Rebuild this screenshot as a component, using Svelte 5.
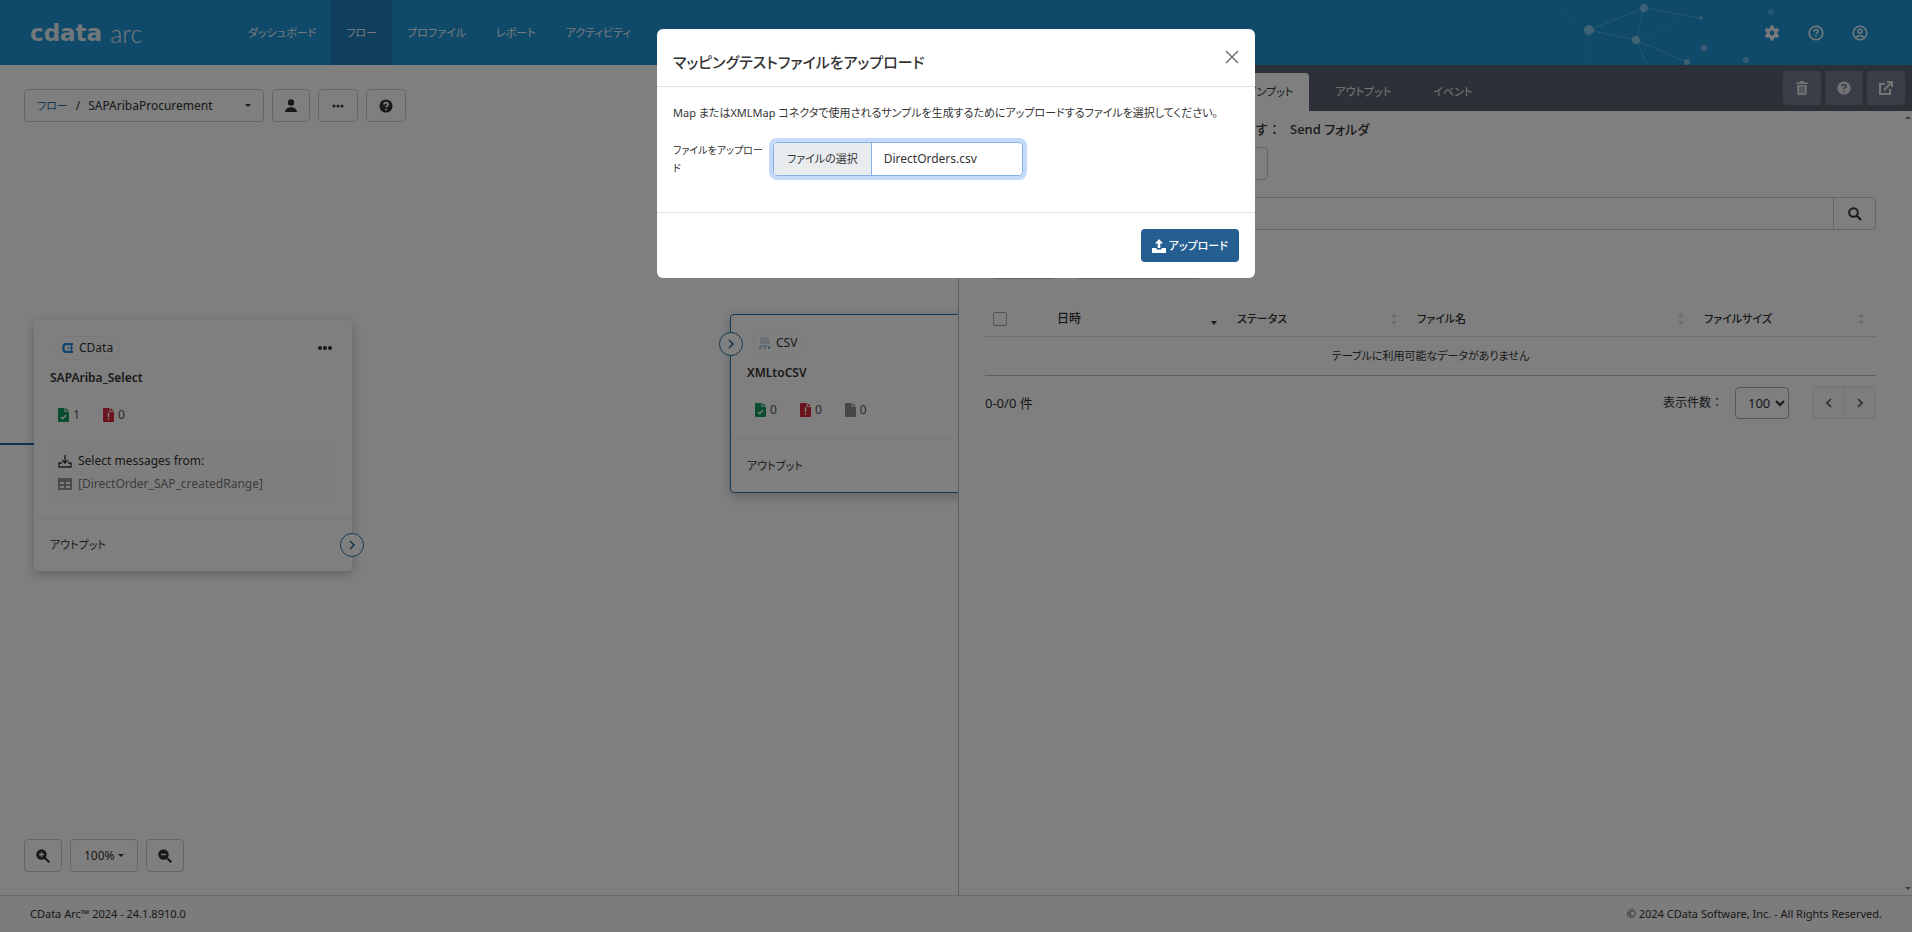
<!--
  App.svelte - Flow workspace
  Flow canvas on the left, connector panel on the right, upload dialog on top.
-->

<script lang="ts">
  interface NavItem {
    label: string;
    active?: boolean;
  }

  const nav: NavItem[] = [
    { label: 'ダッシュボード' },
    { label: 'フロー', active: true },
    { label: 'プロファイル' },
    { label: 'レポート' },
    { label: 'アクティビティ' },
  ];

  const tabs: NavItem[] = [
    { label: 'インプット', active: true },
    { label: 'アウトプット' },
    { label: 'イベント' },
  ];

  const columns = [
    { label: '日時', cls: 'col-date', sorted: true },
    { label: 'ステータス', cls: 'col-status', sorted: false },
    { label: 'ファイル名', cls: 'col-name', sorted: false },
    { label: 'ファイルサイズ', cls: 'col-size', sorted: false },
  ];

  let dialogOpen = $state(true);
  let fileName = $state('DirectOrders.csv');
  let query = $state('');
  let pageSize = $state('100');

  function handleFile(e: Event) {
    const file = (e.target as HTMLInputElement).files?.[0];
    if (file) fileName = file.name;
  }

  function closeDialog() {
    dialogOpen = false;
  }
</script>

{#snippet fileIcon(kind: string)}
  <svg class="file-icon {kind}" viewBox="0 0 11 14" width="11" height="14" aria-hidden="true">
    <path d="M1 0h5.500v4H11v9a1 1 0 0 1-1 1H1a1 1 0 0 1-1-1V1a1 1 0 0 1 1-1z" fill="currentColor" />
    <path d="M7.500 0 11 3.200H7.500z" fill="currentColor" />
    {#if kind === 'ok'}
      <path d="m3 9 1.800 1.800L8.200 7" fill="none" stroke="#fff" stroke-width="1.300" />
    {:else if kind === 'bad'}
      <path d="M5.500 4.500v4.500M5.500 10.200v1.600" fill="none" stroke="#fff" stroke-width="1.400" />
    {/if}
  </svg>
{/snippet}

{#snippet helpSolid()}
  <svg viewBox="0 0 16 16" width="14" height="14" aria-hidden="true">
    <circle cx="8" cy="8" r="7.500" fill="currentColor" />
    <path class="cut" d="M5.700 6.300C5.700 3.400 10.400 3.500 10.400 6.200 10.400 7.800 8 7.900 8 9.500M8 11v1.800" />
  </svg>
{/snippet}

{#snippet chevron(dir: string)}
  <svg viewBox="0 0 10 10" width="10" height="10" aria-hidden="true">
    <path d={dir === 'left' ? 'M7 1 3 5l4 4' : 'm3 1 4 4-4 4'} fill="none" stroke="currentColor" stroke-width="1.600" />
  </svg>
{/snippet}

{#snippet zoomIcon(plus: boolean)}
  <svg viewBox="0 0 14 14" width="14" height="14" aria-hidden="true">
    <circle cx="5.500" cy="5.500" r="5.200" fill="currentColor" />
    <path d="m9 9 4.300 4.300" stroke="currentColor" stroke-width="2.200" />
    <path d={plus ? 'M3 5.500h5M5.500 3v5' : 'M3 5.500h5'} stroke="#fff" stroke-width="1.300" />
  </svg>
{/snippet}

<div class="app">
  <header class="topbar">
    <svg class="network" viewBox="0 0 300 65" width="300" height="65" aria-hidden="true">
      <g stroke="#8fd0f0" fill="none">
        <path d="M39 30 94 8l57 10M39 30l47 10 51 22M94 8l-8 32 11 25" opacity=".45" />
        <path d="M86 40l44-18M39 30v35M39 30 10 12M154 48v17M154 48V35" opacity=".15" />
      </g>
      <g fill="#a8dcf5">
        <circle cx="39" cy="30" r="5" opacity=".7" />
        <circle cx="94" cy="8" r="4" opacity=".6" />
        <circle cx="86" cy="40" r="4" opacity=".7" />
        <circle cx="151" cy="18" r="2" opacity=".5" />
        <circle cx="154" cy="48" r="3" opacity=".6" />
        <circle cx="137" cy="62" r="3" opacity=".6" />
        <circle cx="196" cy="60" r="3" opacity=".5" />
        <circle cx="221" cy="12" r="3" opacity=".3" />
      </g>
    </svg>
    <a class="brand" href="#home"><b>cdata</b><span>arc</span></a>
    <nav class="nav">
      {#each nav as item}
        <a href="#{item.label}" class:active={item.active}>{item.label}</a>
      {/each}
    </nav>
    <div class="top-icons">
      <button aria-label="設定">
        <svg viewBox="0 0 16 16" width="16" height="16" aria-hidden="true">
          <circle cx="8" cy="8" r="4" fill="none" stroke="currentColor" stroke-width="3.200" />
          <path d="M8 .6v3M8 12.400v3M1.600 4.300l2.600 1.500M11.800 10.200l2.600 1.500M1.600 11.700l2.600-1.500M11.800 5.800l2.600-1.500" stroke="currentColor" stroke-width="3.400" />
        </svg>
      </button>
      <button aria-label="ヘルプ">
        <svg viewBox="0 0 16 16" width="16" height="16" fill="none" stroke="currentColor" stroke-width="1.600" aria-hidden="true">
          <circle cx="8" cy="8" r="6.800" />
          <path d="M5.900 6.400C5.900 3.900 10.100 4 10.100 6.400 10.100 7.800 8 7.800 8 9.300M8 10.500v1.600" />
        </svg>
      </button>
      <button aria-label="アカウント">
        <svg viewBox="0 0 16 16" width="16" height="16" fill="none" stroke="currentColor" stroke-width="1.500" aria-hidden="true">
          <circle cx="8" cy="8" r="6.800" />
          <circle cx="8" cy="6.300" r="2" />
          <path d="M3.800 12.800c1.600-2.800 6.800-2.800 8.400 0" />
        </svg>
      </button>
    </div>
  </header>

  <main class="workspace">
    <section class="canvas">
      <div class="toolbar">
        <div class="crumb">
          <a href="#flows">フロー</a>
          <span class="slash">/</span>
          <button class="flow-name">SAPAribaProcurement <i class="caret"></i></button>
        </div>
        <button class="btn" aria-label="ユーザー">
          <svg viewBox="0 0 12 14" width="12" height="14" aria-hidden="true">
            <circle cx="6" cy="3.500" r="3.200" fill="currentColor" />
            <path d="M0 13c0-6.500 12-6.500 12 0z" fill="currentColor" />
          </svg>
        </button>
        <button class="btn" aria-label="その他">
          <svg viewBox="0 0 14 4" width="14" height="4" fill="currentColor" aria-hidden="true">
            <circle cx="3" cy="2" r="1.500" /><circle cx="7" cy="2" r="1.500" /><circle cx="11" cy="2" r="1.500" />
          </svg>
        </button>
        <button class="btn" aria-label="ヘルプ">{@render helpSolid()}</button>
      </div>

      <div class="wire"></div>

      <article class="node node-select">
        <div class="node-top">
          <span class="badge">
            <svg viewBox="0 0 12 10" width="12" height="10" fill="none" stroke="#1f86dc" aria-hidden="true">
              <path d="M11 1.200H3.500C.7 1.200.7 8.800 3.500 8.800H11" stroke-width="2.200" />
              <path d="M11 5H5.500M9.500 1v8" stroke-width="1.200" />
            </svg>
            CData
          </span>
          <button class="more" aria-label="メニュー">
            <svg viewBox="0 0 14 4" width="14" height="4" fill="currentColor" aria-hidden="true">
              <circle cx="2" cy="2" r="2" /><circle cx="7" cy="2" r="2" /><circle cx="12" cy="2" r="2" />
            </svg>
          </button>
        </div>
        <h3>SAPAriba_Select</h3>
        <div class="counts">
          <span>{@render fileIcon('ok')} 1</span>
          <span>{@render fileIcon('bad')} 0</span>
        </div>
        <div class="action">
          <p>
            <svg viewBox="0 0 14 14" width="14" height="14" fill="none" stroke="currentColor" stroke-width="1.300" aria-hidden="true">
              <path d="M7 1v8M4 6l3 3 3-3M4 9H1v4h12V9h-3" />
            </svg>
            Select messages from:
          </p>
          <p class="muted">
            <svg viewBox="0 0 14 14" width="14" height="14" fill="none" stroke="currentColor" stroke-width="1.500" aria-hidden="true">
              <path d="M1 2h12v10H1zM1 4h12M1 8h12M7 4v8" />
            </svg>
            [DirectOrder_SAP_createdRange]
          </p>
        </div>
        <footer>アウトプット</footer>
        <button class="port port-out" aria-label="アウトプット">{@render chevron('right')}</button>
      </article>

      <article class="node node-csv">
        <button class="port port-in" aria-label="インプット">{@render chevron('right')}</button>
        <div class="node-top">
          <span class="badge">
            <svg viewBox="0 0 12 12" width="12" height="12" aria-hidden="true">
              <path d="M1 0h7l3 3v4H1z" fill="#dbe3ea" />
              <path d="M1 9h3M1 9v3h2M5 9h3M5 9v2h2M9 9l1 3 1-3" fill="none" stroke="#6ea9cf" />
            </svg>
            CSV
          </span>
        </div>
        <h3>XMLtoCSV</h3>
        <div class="counts">
          <span>{@render fileIcon('ok')} 0</span>
          <span>{@render fileIcon('bad')} 0</span>
          <span>{@render fileIcon('idle')} 0</span>
        </div>
        <footer>アウトプット</footer>
      </article>

      <div class="zoombar">
        <button class="btn" aria-label="拡大">{@render zoomIcon(true)}</button>
        <button class="btn zoom-level">100% <i class="caret"></i></button>
        <button class="btn" aria-label="縮小">{@render zoomIcon(false)}</button>
      </div>
    </section>

    <section class="panel">
      <div class="panel-head">
        <div class="tabs">
          {#each tabs as tab}
            <button class:active={tab.active}>{tab.label}</button>
          {/each}
        </div>
        <div class="panel-tools">
          <button aria-label="削除">
            <svg viewBox="0 0 12 14" width="12" height="14" aria-hidden="true">
              <path d="M0 1.500h3.500L4.500 0h3l1 1.500H12V3H0zM1 4h10l-.6 10H1.600z" fill="currentColor" />
              <path class="cut-line" d="M4 5.500v7M6 5.500v7M8 5.500v7" />
            </svg>
          </button>
          <button aria-label="ヘルプ">{@render helpSolid()}</button>
          <button aria-label="新しいウィンドウで開く">
            <svg viewBox="0 0 14 14" width="14" height="14" fill="none" stroke="currentColor" stroke-width="2" aria-hidden="true">
              <path d="M6 3H1v10h10V8M5 9l7-7M8 1h5v5" />
            </svg>
          </button>
        </div>
      </div>

      <div class="panel-body">
        <p class="folder"><span>このコネクタが処理するファイルを示します：</span><b>Send フォルダ</b></p>
        <button class="btn wide" aria-label="ファイルを追加"></button>
        <div class="search">
          <input type="search" aria-label="検索" bind:value={query} />
          <button aria-label="検索">
            <svg viewBox="0 0 14 14" width="14" height="14" fill="none" stroke="currentColor" aria-hidden="true">
              <circle cx="5.500" cy="5.500" r="4.300" stroke-width="2" />
              <path d="m8.800 8.800 4.200 4.200" stroke-width="2.200" />
            </svg>
          </button>
        </div>
        <div class="bulk">
          <button class="btn" aria-label="送信"></button>
          <button class="btn" aria-label="一括操作"></button>
        </div>

        <table>
          <thead>
            <tr>
              <th class="col-check"><input type="checkbox" aria-label="すべて選択" /></th>
              {#each columns as col}
                <th class={col.cls}>
                  <div>
                    {col.label}
                    <svg class="sort" class:sorted={col.sorted} viewBox="0 0 8 16" width="8" height="16" aria-hidden="true">
                      <path class="up" d="m1 6 3-4 3 4z" />
                      <path class="down" d="m1 10 3 4 3-4z" />
                    </svg>
                  </div>
                </th>
              {/each}
            </tr>
          </thead>
          <tbody>
            <tr><td colspan="5">テーブルに利用可能なデータがありません</td></tr>
          </tbody>
        </table>

        <div class="pager">
          <span>0-0/0 件</span>
          <label for="page-size">表示件数：</label>
          <select id="page-size" bind:value={pageSize}>
            <option>10</option>
            <option>100</option>
          </select>
          <div class="pages">
            <button aria-label="前へ">{@render chevron('left')}</button>
            <button aria-label="次へ">{@render chevron('right')}</button>
          </div>
        </div>
      </div>
      <div class="scroll" aria-hidden="true"><i class="arrow-up"></i><i class="caret"></i></div>
    </section>
  </main>

  <footer class="page-footer">
    <span>CData Arc™ 2024 - 24.1.8910.0</span>
    <span>© 2024 CData Software, Inc. - All Rights Reserved.</span>
  </footer>
</div>

{#if dialogOpen}
  <div class="backdrop">
    <div class="dialog" role="dialog" aria-modal="true" aria-labelledby="dialog-title">
      <div class="dialog-head">
        <h2 id="dialog-title">マッピングテストファイルをアップロード</h2>
        <button class="close" aria-label="閉じる" onclick={closeDialog}>
          <svg viewBox="0 0 14 14" width="14" height="14" aria-hidden="true">
            <path d="m1 1 12 12M13 1 1 13" stroke="currentColor" stroke-width="1.400" />
          </svg>
        </button>
      </div>
      <div class="dialog-body">
        <p>Map またはXMLMap コネクタで使用されるサンプルを生成するためにアップロードするファイルを選択してください。</p>
        <div class="field">
          <label for="upload-file">ファイルをアップロード</label>
          <label class="picker">
            <input id="upload-file" type="file" onchange={handleFile} />
            <span class="pick">ファイルの選択</span>
            <span class="picked">{fileName}</span>
          </label>
        </div>
      </div>
      <div class="dialog-foot">
        <button class="primary" onclick={closeDialog}>
          <svg viewBox="0 0 14 14" width="14" height="14" fill="currentColor" aria-hidden="true">
            <path d="M7 0l4 4.500H8.300V9H5.700V4.500H3z" />
            <path d="M0 9h4.500v1.500h5V9H14v5H0z" />
          </svg>
          アップロード
        </button>
      </div>
    </div>
  </div>
{/if}

<style>
  :global(body) {
    background: #fff;
    color: #333;
    font-family: "Noto Sans", "Noto Sans CJK JP", sans-serif;
    font-size: 12px;
    line-height: 18px;
    font-feature-settings: "palt";
  }

  .app {
    display: flex;
    flex-direction: column;
    min-height: 100vh;
  }

  button, input, select {
    box-sizing: border-box;
    margin: 0;
    padding: 0;
    border: 0;
    background: none;
    color: inherit;
    font: inherit;
    font-feature-settings: inherit;
  }

  a { color: inherit; text-decoration: none; }
  h2, h3, p { margin: 0; }
  svg { display: block; flex-shrink: 0; }

  .nav, .crumb a, .tabs, .node footer, td, th,
  .dialog-body, .primary {
    font-size: 11px;
  }

  .topbar {
    position: relative;
    display: flex;
    height: 65px;
    background: #2095d5;
    color: #eef4f8;
  }

  .network {
    position: absolute;
    right: 62px;
    top: 0;
  }

  .brand {
    display: flex;
    align-items: center;
    gap: 8px;
    width: 203px;
    padding-left: 30px;
    color: #e4eef4;
  }
  .brand b { font: bold 23px "DejaVu Sans", sans-serif; }
  .brand span { font: 300 25px Lato, sans-serif; }

  .nav { display: flex; }
  .nav a {
    display: flex;
    align-items: center;
    padding: 0 15px;
  }
  .nav a.active { background: #207ebc; }

  .top-icons {
    position: relative;
    display: flex;
    align-items: center;
    gap: 28px;
    margin-left: auto;
    padding-right: 44px;
  }

  .workspace {
    display: flex;
    flex: 1;
  }

  .canvas {
    position: relative;
    display: flex;
    flex: 1;
    flex-direction: column;
    justify-content: space-between;
    padding: 24px 24px 23px;
    overflow: hidden;
  }

  .toolbar, .zoombar {
    display: flex;
    gap: 8px;
  }

  .btn {
    display: flex;
    align-items: center;
    justify-content: center;
    height: 33px;
    padding: 0 11px;
    border: 1px solid #c8ccd0;
    border-radius: 4px;
  }
  .toolbar .btn { padding: 0 12px; }
  .zoombar .btn { gap: 3px; }
  .zoombar .zoom-level { padding: 0 13px; }

  .crumb {
    display: flex;
    align-items: center;
    box-sizing: border-box;
    width: 240px;
    height: 33px;
    padding: 0 12px;
    border: 1px solid #c8ccd0;
    border-radius: 4px;
  }
  .crumb a { color: #2a6f98; }
  .slash { padding: 0 8px; }
  .flow-name {
    display: flex;
    flex: 1;
    align-items: center;
    justify-content: space-between;
  }

  .caret {
    border: 3px solid transparent;
    border-top-color: currentColor;
    border-bottom: 0;
  }

  .cut { fill: none; stroke: #fff; stroke-width: 2; }

  /* Nodes sit at their own spots on the free canvas */
  .wire {
    position: absolute;
    left: 0;
    top: 378px;
    width: 34px;
    height: 2px;
    background: #2464ac;
  }

  .node {
    position: absolute;
    box-sizing: border-box;
    width: 318px;
    background: #fff;
    border-radius: 4px;
    box-shadow: 0 3px 12px rgba(40, 50, 80, 0.3);
  }
  .node-select { left: 34px; top: 255px; }
  .node-csv {
    left: 730px;
    top: 249px;
    border: 1px solid #2878b0;
  }

  .node-top {
    display: flex;
    align-items: center;
    justify-content: space-between;
    padding: 16px 20px 0 21px;
  }

  .badge {
    display: flex;
    align-items: center;
    gap: 5px;
    height: 22px;
    padding: 0 6px;
    border: 1px solid #f2f4f6;
    border-radius: 12px;
  }

  .node h3 {
    padding: 9px 16px 0;
    font-size: 12px;
    font-weight: 600;
    line-height: 18px;
  }

  .counts {
    display: flex;
    gap: 23px;
    padding: 19px 24px 17px;
  }
  .counts span {
    display: flex;
    align-items: center;
    gap: 4px;
    color: #555;
  }
  .node-csv .counts { padding-bottom: 20px; }
  .counts .ok { color: #0f9a5c; }
  .counts .bad { color: #d8283c; }
  .counts .idle { color: #8a8d90; }

  .action {
    margin: 0 16px 14px;
    padding: 8px;
    background: #fdfdfd;
    border-bottom: 1px solid #f4f4f4;
  }
  .action p {
    display: flex;
    align-items: center;
    gap: 6px;
    height: 23px;
  }
  .muted { color: #7a7a7a; }

  .node footer {
    padding: 17px 16px;
    border-top: 1px solid #f0f2f4;
  }

  .port {
    position: absolute;
    display: flex;
    align-items: center;
    justify-content: center;
    width: 24px;
    height: 24px;
    border: 1px solid #2c74a0;
    border-radius: 50%;
    background: #fff;
    color: #33668a;
  }
  .port-out { right: -12px; bottom: 14px; }
  .port-in { left: -12px; top: 17px; }

  .panel {
    position: relative;
    box-sizing: border-box;
    width: calc(50% - 2px);
    border-left: 1px solid #b8bcc0;
    background: #fff;
  }

  .panel-head {
    display: flex;
    align-items: flex-end;
    justify-content: space-between;
    height: 46px;
    background: #58636f;
    color: #f0f0f0;
  }

  .tabs {
    display: flex;
    align-items: flex-end;
    gap: 10px;
    padding-left: 272px;
  }
  .tabs button {
    height: 38px;
    padding: 0 16px;
    border-radius: 4px 4px 0 0;
  }
  .tabs .active { background: #fff; color: #333; }

  .panel-tools {
    display: flex;
    align-self: center;
    gap: 4px;
    padding-right: 7px;
  }
  .panel-tools button {
    display: flex;
    align-items: center;
    justify-content: center;
    width: 38px;
    height: 34px;
    border-radius: 3px;
    background: #727d90;
    color: #e8e8e8;
  }
  .panel-tools .cut { stroke: #727d90; }
  .cut-line { fill: none; stroke: #727d90; }

  .panel-body { padding: 9px 36px 0 26px; }

  .folder {
    display: flex;
    font-size: 13px;
  }
  .folder span, .folder b { font-weight: 500; }
  .folder span {
    width: 296px;
    text-align: right;
    white-space: nowrap;
    font-feature-settings: normal;
  }
  .folder b { padding-left: 9px; }

  .wide { width: 283px; margin-top: 9px; }

  .search {
    display: flex;
    height: 33px;
    margin-top: 17px;
    border: 1px solid #c8ccd0;
    border-radius: 4px;
    box-sizing: border-box;
  }
  .search input { flex: 1; padding: 0 12px; }
  .search button {
    display: flex;
    align-items: center;
    justify-content: center;
    width: 42px;
    border-left: 1px solid #c8ccd0;
  }

  .bulk {
    display: flex;
    gap: 17px;
    margin: 16px 0 23px;
    padding-left: 6px;
  }
  .bulk .btn { width: 66px; }
  .bulk .btn + .btn { width: 128px; }

  table {
    width: 100%;
    border-collapse: collapse;
    table-layout: fixed;
  }
  th {
    height: 34px;
    padding: 0 11px 0 8px;
    border-bottom: 1px solid #d8dadc;
    font-weight: 500;
    text-align: left;
  }
  th div {
    display: flex;
    align-items: center;
    justify-content: space-between;
  }
  td {
    height: 38px;
    padding: 0;
    border-bottom: 1px solid #b4b8ba;
    text-align: center;
  }
  .col-check { width: 45px; }
  .col-date, .col-status, .col-size { width: 161px; }
  .col-date { font-size: 12px; }
  th input {
    display: block;
    width: 14px;
    height: 14px;
    appearance: none;
    border: 1px solid #a4a8ac;
    border-radius: 2px;
  }

  .sort path { fill: #d8dadc; }
  .sort.sorted .up { fill: none; }
  .sort.sorted .down { fill: #333; }

  .pager {
    display: flex;
    align-items: center;
    padding-top: 10px;
  }
  .pager > span { font-size: 13px; }
  .pager label {
    margin-left: auto;
    padding-right: 12px;
    font-feature-settings: normal;
  }
  .pager select {
    width: 54px;
    height: 32px;
    padding-left: 8px;
    border: 1px solid #a8acb0;
    border-radius: 4px;
    font-size: 13px;
  }
  .pages {
    display: flex;
    margin-left: 23px;
    border: 1px solid #e4e8e8;
    border-radius: 4px;
    background: #f8fafa;
    color: #555;
  }
  .pages button {
    display: flex;
    align-items: center;
    justify-content: center;
    width: 31px;
    height: 31px;
  }
  .pages button + button { border-left: 1px solid #e4e8e8; }

  .scroll {
    position: absolute;
    right: 1px;
    top: 51px;
    bottom: 5px;
    display: flex;
    flex-direction: column;
    justify-content: space-between;
    color: #777;
  }
  .arrow-up {
    border: 3px solid transparent;
    border-bottom-color: currentColor;
    border-top: 0;
  }

  .page-footer {
    display: flex;
    align-items: center;
    justify-content: space-between;
    height: 36px;
    padding: 0 30px;
    border-top: 1px solid #d4d4d4;
    background: #f8f8f8;
    font-size: 11px;
  }

  .backdrop {
    position: fixed;
    inset: 0;
    padding-top: 29px;
    background: rgba(0, 0, 0, 0.5);
  }

  .dialog {
    width: 598px;
    margin: 0 auto;
    border-radius: 6px;
    background: #fff;
  }

  .dialog-head {
    display: flex;
    justify-content: space-between;
    padding: 21px 16px 11px;
    border-bottom: 1px solid #dee2e6;
  }
  .dialog-head h2 {
    font-size: 15px;
    font-weight: 500;
    line-height: 25px;
  }
  .close {
    display: flex;
    width: 14px;
    height: 14px;
    color: #666;
  }

  .dialog-body { padding: 17px 16px 35px; }
  .field {
    display: flex;
    align-items: center;
    gap: 8px;
    margin-top: 19px;
  }
  .field > label:first-child {
    width: 92px;
    font-size: 10px;
    word-break: break-all;
    line-break: anywhere;
  }

  .picker {
    position: relative;
    display: flex;
    box-sizing: border-box;
    width: 250px;
    height: 34px;
    border: 1px solid #86b0e0;
    border-radius: 4px;
    box-shadow: 0 0 0 4px #c4dafa;
    line-height: 32px;
  }
  .picker input {
    position: absolute;
    inset: 0;
    width: 100%;
    opacity: 0;
  }
  .pick {
    padding: 0 13px;
    border-right: 1px solid #86b0e0;
    border-radius: 4px 0 0 4px;
    background: #e9ecef;
  }
  .picked {
    padding: 0 12px;
    font-size: 12px;
  }

  .dialog-foot {
    display: flex;
    justify-content: flex-end;
    padding: 16px;
    border-top: 1px solid #dee2e6;
  }
  .primary {
    display: flex;
    align-items: center;
    gap: 3px;
    height: 33px;
    padding: 0 11px;
    border-radius: 4px;
    background: #255f92;
    color: #fff;
    font-weight: 500;
  }
</style>
